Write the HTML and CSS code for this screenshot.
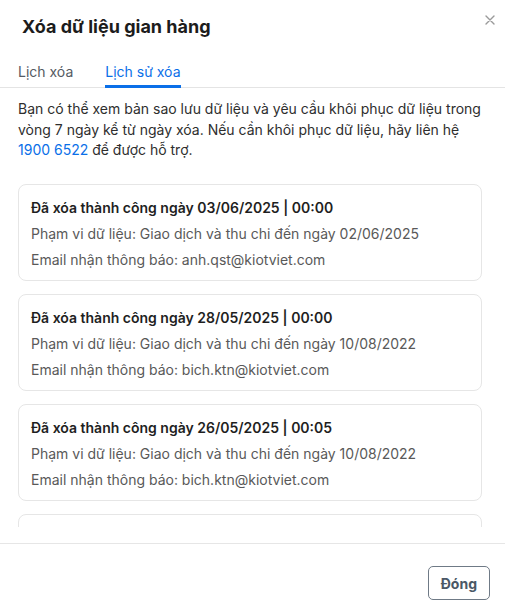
FILE: index.html
```html
<!DOCTYPE html>
<html lang="vi">
<head>
    <meta charset="UTF-8">
    <title>Xóa dữ liệu gian hàng</title>
    <meta name="viewport" content="width=device-width, initial-scale=1.0">
    <link rel="stylesheet" href="styles.css">
</head>
<body>
    <div class="modal">
        <div class="modal-header">
            <h1>Xóa dữ liệu gian hàng</h1>
            <button class="close" aria-label="Đóng">
                <svg width="10" height="10" viewBox="0 0 10 10">
                    <path d="M1 1L9 9M9 1L1 9" stroke="#9a9a9a" stroke-width="1.4" stroke-linecap="round"/>
                </svg>
            </button>
        </div>
        <div class="tabs">
            <div class="tab">Lịch xóa</div>
            <div class="tab active">Lịch sử xóa</div>
        </div>
        <div class="scroll">
            <p class="note">Bạn có thể xem bản sao lưu dữ liệu và yêu cầu khôi phục dữ liệu trong vòng 7 ngày kể từ ngày xóa. Nếu cần khôi phục dữ liệu, hãy liên hệ <a href="#">1900 6522</a> để được hỗ trợ.</p>
            <div class="list">
                <div class="card">
                    <div class="card-title">Đã xóa thành công ngày 03/06/2025 | 00:00</div>
                    <div class="card-line">Phạm vi dữ liệu: Giao dịch và thu chi đến ngày 02/06/2025</div>
                    <div class="card-line">Email nhận thông báo: anh.qst@kiotviet.com</div>
                </div>
                <div class="card">
                    <div class="card-title">Đã xóa thành công ngày 28/05/2025 | 00:00</div>
                    <div class="card-line">Phạm vi dữ liệu: Giao dịch và thu chi đến ngày 10/08/2022</div>
                    <div class="card-line">Email nhận thông báo: bich.ktn@kiotviet.com</div>
                </div>
                <div class="card">
                    <div class="card-title">Đã xóa thành công ngày 26/05/2025 | 00:05</div>
                    <div class="card-line">Phạm vi dữ liệu: Giao dịch và thu chi đến ngày 10/08/2022</div>
                    <div class="card-line">Email nhận thông báo: bich.ktn@kiotviet.com</div>
                </div>
                <div class="card"></div>
            </div>
        </div>
        <div class="modal-footer">
            <button class="btn">Đóng</button>
        </div>
    </div>
</body>
</html>
```

FILE: styles.css
```css
body {
    font-family: Inter, 'Noto Sans', sans-serif;
    background-color: #fff;
    margin: 0;
}
.modal {
    width: 505px;
    height: 606px;
    display: flex;
    flex-direction: column;
    background-color: #fff;
}
.modal-header {
    height: 52px;
    padding: 0 10px 0 22px;
    display: flex;
    justify-content: space-between;
    align-items: flex-start;
}
h1 {
    margin: 16px 0 0;
    font-size: 18px;
    line-height: 22px;
    font-weight: 700;
    color: #1c1c1c;
}
.close {
    margin-top: 15px;
    width: 10px;
    height: 10px;
    padding: 0;
    border: none;
    background: none;
    display: flex;
}
.tabs {
    display: flex;
    gap: 32px;
    padding: 0 18px;
    border-bottom: 1px solid #e4e4e4;
}
.tab {
    padding: 10px 0 3px;
    font-size: 14px;
    line-height: 20px;
    color: #555b63;
    border-bottom: 3px solid transparent;
    margin-bottom: -1px;
}
.tab.active {
    color: #0a6fe8;
    border-bottom-color: #0a6fe8;
}
.scroll {
    flex: 1;
    overflow: hidden;
    padding: 11px 23px 0 18px;
    margin-bottom: 16px;
}
.note {
    margin: 0 0 23px;
    font-size: 14px;
    line-height: 20.5px;
    color: #2e2e2e;
}
.note a {
    color: #0a6fe8;
    text-decoration: none;
}
.list {
    display: flex;
    flex-direction: column;
    gap: 13px;
}
.card {
    border: 1px solid #e6e6e6;
    border-radius: 8px;
    padding: 10px 12px 7px;
    min-height: 78px;
}
.card-title {
    font-size: 14px;
    line-height: 26px;
    font-weight: 600;
    color: #1f1f1f;
}
.card-line {
    font-size: 14px;
    line-height: 26px;
    color: #595959;
}
.modal-footer {
    border-top: 1px solid #e6e6e6;
    padding: 22px 15px 6px;
    display: flex;
    justify-content: flex-end;
}
.btn {
    height: 34px;
    padding: 0 12px;
    background-color: #fff;
    border: 1px solid #6f7a86;
    border-radius: 5px;
    font-family: Inter, 'Noto Sans', sans-serif;
    font-size: 14px;
    font-weight: 700;
    color: #4b5866;
    cursor: pointer;
}
```
